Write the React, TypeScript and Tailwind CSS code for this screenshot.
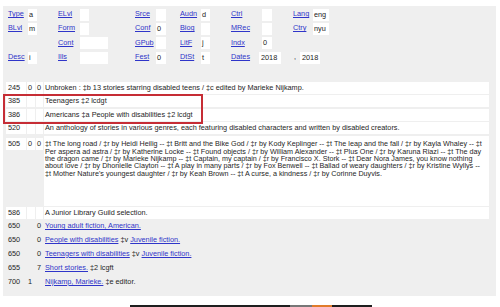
import React from "react";

const L = ({ children }: { children: React.ReactNode }) => (
  <a className="text-[#2f35c9] underline decoration-[0.6px] underline-offset-[1px]">{children}</a>
);

const Box = ({ v, w }: { v?: string; w: string }) => (
  <div className={`${w} h-[12px] bg-white pl-[1px] leading-[12px] text-[#222]`}>{v ?? ""}</div>
);

const Field = ({
  cw,
  lw,
  label,
  v,
  bw,
}: {
  cw: string;
  lw: string;
  label?: string;
  v?: string;
  bw: string;
}) => (
  <div className={`${cw} flex items-center shrink-0`}>
    {label ? (
      <>
        <div className={`${lw} shrink-0`}>
          <L>{label}</L>
        </div>
        <Box v={v} w={bw} />
      </>
    ) : null}
  </div>
);

const Row = ({ children }: { children: React.ReactNode }) => (
  <div className="flex h-[14.3px] items-center">{children}</div>
);

const Cell = ({ w, children, white = true }: { w: string; children?: React.ReactNode; white?: boolean }) => (
  <div className={`${w} h-[12px] shrink-0 ${white ? "bg-white" : ""} pl-[1px] leading-[12px] whitespace-nowrap`}>
    {children}
  </div>
);

const VRow = ({
  tag,
  i1,
  i2,
  white = true,
  children,
}: {
  tag: string;
  i1?: string;
  i2?: string;
  white?: boolean;
  children: React.ReactNode;
}) => (
  <div className="flex gap-[1px]">
    <Cell w="w-[20px] pl-[2px]" white={white}>{tag}</Cell>
    <Cell w="w-[8px]" white={white}>{i1}</Cell>
    <Cell w="w-[7px]" white={white}>{i2}</Cell>
    <Cell w="w-[445px]" white={white}>{children}</Cell>
  </div>
);

export default function App() {
  const lines = [
    "‡t The long road / ‡r by Heidi Heilig -- ‡t Britt and the Bike God / ‡r by Kody Keplinger -- ‡t The leap and the fall / ‡r by Kayla Whaley -- ‡t",
    "Per aspera ad astra / ‡r by Katherine Locke -- ‡t Found objects / ‡r by William Alexander -- ‡t Plus One / ‡r by Karuna Riazi -- ‡t The day",
    "the dragon came / ‡r by Marieke Nijkamp -- ‡t Captain, my captain / ‡r by Francisco X. Stork -- ‡t Dear Nora James, you know nothing",
    "about love / ‡r by Dhonielle Clayton -- ‡t A play in many parts / ‡r by Fox Benwell -- ‡t Ballad of weary daughters / ‡r by Kristine Wyllys --",
    "‡t Mother Nature's youngest daughter / ‡r by Keah Brown -- ‡t A curse, a kindness / ‡r by Corinne Duyvis.",
  ];
  return (
    <div className="w-[500px] h-[307px] overflow-hidden bg-white font-['Liberation_Sans',Arial,sans-serif] text-[7.3px] text-[#252525]">
      <div className="mt-[6px] ml-[3px] w-[493px] bg-[#efefef] pt-[1.5px] pb-[8px]">
        {/* fixed fields */}
        <div className="pl-[5px]">
          <Row>
            <Field cw="w-[50px]" lw="w-[20px]" label="Type" v="a" bw="w-[9px]" />
            <Field cw="w-[77px]" lw="w-[22px]" label="ELvl" bw="w-[9px]" />
            <Field cw="w-[45px]" lw="w-[21px]" label="Srce" bw="w-[10px]" />
            <Field cw="w-[51px]" lw="w-[21px]" label="Audn" v="d" bw="w-[9px]" />
            <Field cw="w-[62px]" lw="w-[31px]" label="Ctrl" bw="w-[10px]" />
            <Field cw="w-[60px]" lw="w-[20px]" label="Lang" v="eng" bw="w-[16px]" />
          </Row>
          <Row>
            <Field cw="w-[50px]" lw="w-[20px]" label="BLvl" v="m" bw="w-[9px]" />
            <Field cw="w-[77px]" lw="w-[22px]" label="Form" bw="w-[9px]" />
            <Field cw="w-[45px]" lw="w-[21px]" label="Conf" v="0" bw="w-[10px]" />
            <Field cw="w-[51px]" lw="w-[21px]" label="Biog" bw="w-[9px]" />
            <Field cw="w-[62px]" lw="w-[31px]" label="MRec" bw="w-[10px]" />
            <Field cw="w-[60px]" lw="w-[20px]" label="Ctry" v="nyu" bw="w-[16px]" />
          </Row>
          <Row>
            <Field cw="w-[50px]" lw="w-[20px]" bw="w-[9px]" />
            <Field cw="w-[77px]" lw="w-[22px]" label="Cont" bw="w-[28px]" />
            <Field cw="w-[45px]" lw="w-[21px]" label="GPub" bw="w-[10px]" />
            <Field cw="w-[51px]" lw="w-[21px]" label="LitF" v="j" bw="w-[9px]" />
            <Field cw="w-[62px]" lw="w-[31px]" label="Indx" v="0" bw="w-[10px]" />
          </Row>
          <Row>
            <Field cw="w-[50px]" lw="w-[20px]" label="Desc" v="i" bw="w-[9px]" />
            <Field cw="w-[77px]" lw="w-[22px]" label="Ills" bw="w-[28px]" />
            <Field cw="w-[45px]" lw="w-[21px]" label="Fest" v="0" bw="w-[10px]" />
            <Field cw="w-[51px]" lw="w-[21px]" label="DtSt" v="t" bw="w-[9px]" />
            <div className="flex items-center">
              <div className="w-[28px] shrink-0">
                <L>Dates</L>
              </div>
              <Box v="2018" w="w-[22px] pl-[2px]" />
              <div className="w-[19px] pl-[13px]">,</div>
              <Box v="2018" w="w-[20px] pl-[2px]" />
            </div>
          </Row>
        </div>

        {/* variable fields */}
        <div className="mt-[17.3px] pl-[3px] flex flex-col gap-[1.4px]">
          <VRow tag="245" i1="0" i2="0">
            Unbroken : ‡b 13 stories starring disabled teens / ‡c edited by Marieke Nijkamp.
          </VRow>
          <div className="relative flex flex-col gap-[1.4px]">
            <VRow tag="385">Teenagers ‡2 lcdgt</VRow>
            <VRow tag="386">Americans ‡a People with disabilities ‡2 lcdgt</VRow>
            <div className="absolute left-[-3px] top-[-1.5px] w-[200px] h-[30px] border-2 border-[#c62d35] pointer-events-none" />
          </div>
          <VRow tag="520">
            An anthology of stories in various genres, each featuring disabled characters and written by disabled creators.
          </VRow>
          <div className="flex gap-[1px] h-[70px]">
            <div className="w-[20px] h-[12px] mt-[2.5px] bg-white pl-[2px] leading-[12px]">505</div>
            <div className="w-[8px] h-[12px] mt-[2.5px] bg-white pl-[1px] leading-[12px]">0</div>
            <div className="w-[7px] h-[12px] mt-[2.5px] bg-white pl-[1px] leading-[12px]">0</div>
            <div className="w-[445px] h-[70px] bg-white pl-[1px] pt-[4.8px] text-[7.2px] leading-[7.3px]">
              {lines.map((l, i) => (
                <div key={i} className="whitespace-nowrap">
                  {l}
                </div>
              ))}
            </div>
          </div>
          <VRow tag="586">A Junior Library Guild selection.</VRow>
          <div className="flex flex-col gap-[1.8px]">
            <VRow tag="650" i2="0" white={false}>
              <L>Young adult fiction, American.</L>
            </VRow>
            <VRow tag="650" i2="0" white={false}>
              <L>People with disabilities</L> ‡v <L>Juvenile fiction.</L>
            </VRow>
            <VRow tag="650" i2="0" white={false}>
              <L>Teenagers with disabilities</L> ‡v <L>Juvenile fiction.</L>
            </VRow>
            <VRow tag="655" i2="7" white={false}>
              <L>Short stories.</L> ‡2 lcgft
            </VRow>
            <VRow tag="700" i1="1" white={false}>
              <L>Nijkamp, Marieke.</L> ‡e editor.
            </VRow>
          </div>
        </div>
      </div>
      <div className="mt-[9px] flex h-[2px] pl-[130px]">
        <div className="w-[160px] bg-[#1e1e1e]" />
        <div className="w-[22px] bg-[#777]" />
        <div className="w-[20px] bg-[#e07b2a]" />
        <div className="w-[40px] bg-[#1e1e1e]" />
      </div>
    </div>
  );
}
